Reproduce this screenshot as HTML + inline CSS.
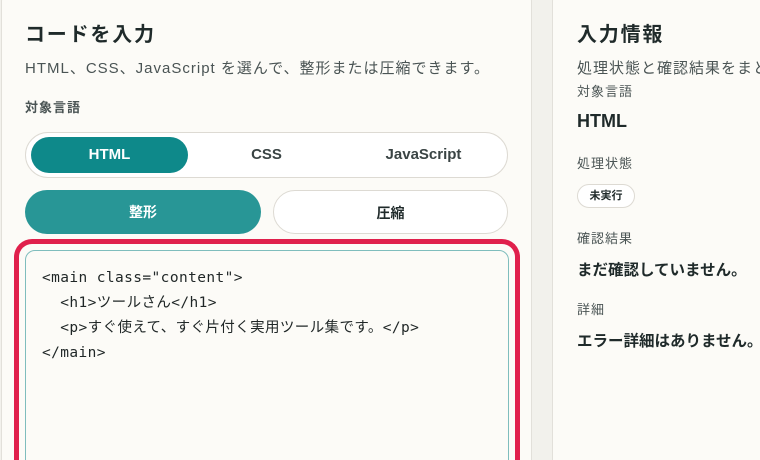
<!DOCTYPE html>
<html style="width:760px;height:460px;overflow:hidden"><head><meta charset="utf-8"><style>
*{box-sizing:border-box;margin:0;padding:0}
body{width:760px;height:460px;overflow:hidden;background:#f2f1ec;font-family:"Liberation Sans","Noto Sans CJK JP",sans-serif;color:#1f2a2a;position:relative}
.card{position:absolute;top:-20px;height:480px;background:#fcfbf7;border:1px solid #e2e0da;border-bottom:none;border-radius:22px 22px 0 0}
.abs{position:absolute;white-space:nowrap}
h2{font-size:20px;font-weight:700;letter-spacing:1.8px}
.desc{font-size:15px;color:#4a5454;letter-spacing:1px}
.lbl{font-size:13px;color:#4a5454;letter-spacing:1px}
.seg{position:absolute;left:25px;top:132px;width:483px;height:46px;border:1px solid #dddad3;border-radius:23px;background:#fff}
.opt{position:absolute;top:4px;height:36px;line-height:36px;text-align:center;font-size:15px;font-weight:700;color:#3a4444;border-radius:18px}
.btn{position:absolute;top:190px;height:44px;line-height:44px;text-align:center;font-size:14px;font-weight:700;border-radius:22px}
.code{position:absolute;left:14px;top:239px;width:506px;height:221px;border:5px solid #e0204c;border-bottom:none;border-radius:18px 18px 0 0;overflow:hidden}
.code .in{position:absolute;left:6px;top:6px;right:6px;bottom:-20px;border:1px solid #7fbdbd;border-radius:10px;background:#fcfbf7}
pre{position:absolute;left:42px;top:266px;font-family:"DejaVu Sans Mono","Noto Sans CJK JP",monospace;font-size:14.5px;letter-spacing:0.4px;line-height:25px;color:#1f2626}
.clip{position:absolute;left:552px;top:0;width:208px;height:460px;overflow:hidden}
.clip .abs{margin-left:-552px}
</style></head><body>
<div class="card" style="left:1px;width:531px"></div>
<div class="card" style="left:552px;width:208px;border-right:none;border-radius:22px 0 0 0"></div>
<div class="abs" style="left:25px;top:18px"><h2>コードを入力</h2></div>
<div class="abs desc" style="left:25px;top:57px">HTML、CSS、JavaScript を選んで、整形または圧縮できます。</div>
<div class="abs lbl" style="left:25px;top:97px;font-weight:700">対象言語</div>
<div class="seg">
<div class="opt" style="left:5px;width:157px;background:#0e898a;color:#fff">HTML</div>
<div class="opt" style="left:162px;width:157px">CSS</div>
<div class="opt" style="left:319px;width:157px">JavaScript</div>
</div>
<div class="btn" style="left:25px;width:236px;background:#289696;color:#fff">整形</div>
<div class="btn" style="left:273px;width:235px;background:#fff;border:1px solid #dddad3;color:#1f2a2a">圧縮</div>
<div class="code"><div class="in"></div></div>
<pre>&lt;main class="content"&gt;
  &lt;h1&gt;ツールさん&lt;/h1&gt;
  &lt;p&gt;すぐ使えて、すぐ片付く実用ツール集です。&lt;/p&gt;
&lt;/main&gt;</pre>
<div class="clip">
<div class="abs" style="left:577px;top:18px"><h2>入力情報</h2></div>
<div class="abs desc" style="left:577px;top:57px">処理状態と確認結果をまとめて表示します。</div>
<div class="abs lbl" style="left:577px;top:81px">対象言語</div>
<div class="abs" style="left:577px;top:111px;font-size:18px;font-weight:700">HTML</div>
<div class="abs lbl" style="left:577px;top:153px">処理状態</div>
<div class="abs" style="left:577px;top:184px;width:58px;height:24px;border:1px solid #dddad3;border-radius:12px;background:#fff;font-size:11px;font-weight:700;text-align:center;line-height:22px">未実行</div>
<div class="abs lbl" style="left:577px;top:228px">確認結果</div>
<div class="abs" style="left:577px;top:258px;font-size:15.5px;font-weight:700">まだ確認していません。</div>
<div class="abs lbl" style="left:577px;top:299px">詳細</div>
<div class="abs" style="left:577px;top:329px;font-size:15.5px;font-weight:700">エラー詳細はありません。</div>
</div>
</body></html>
